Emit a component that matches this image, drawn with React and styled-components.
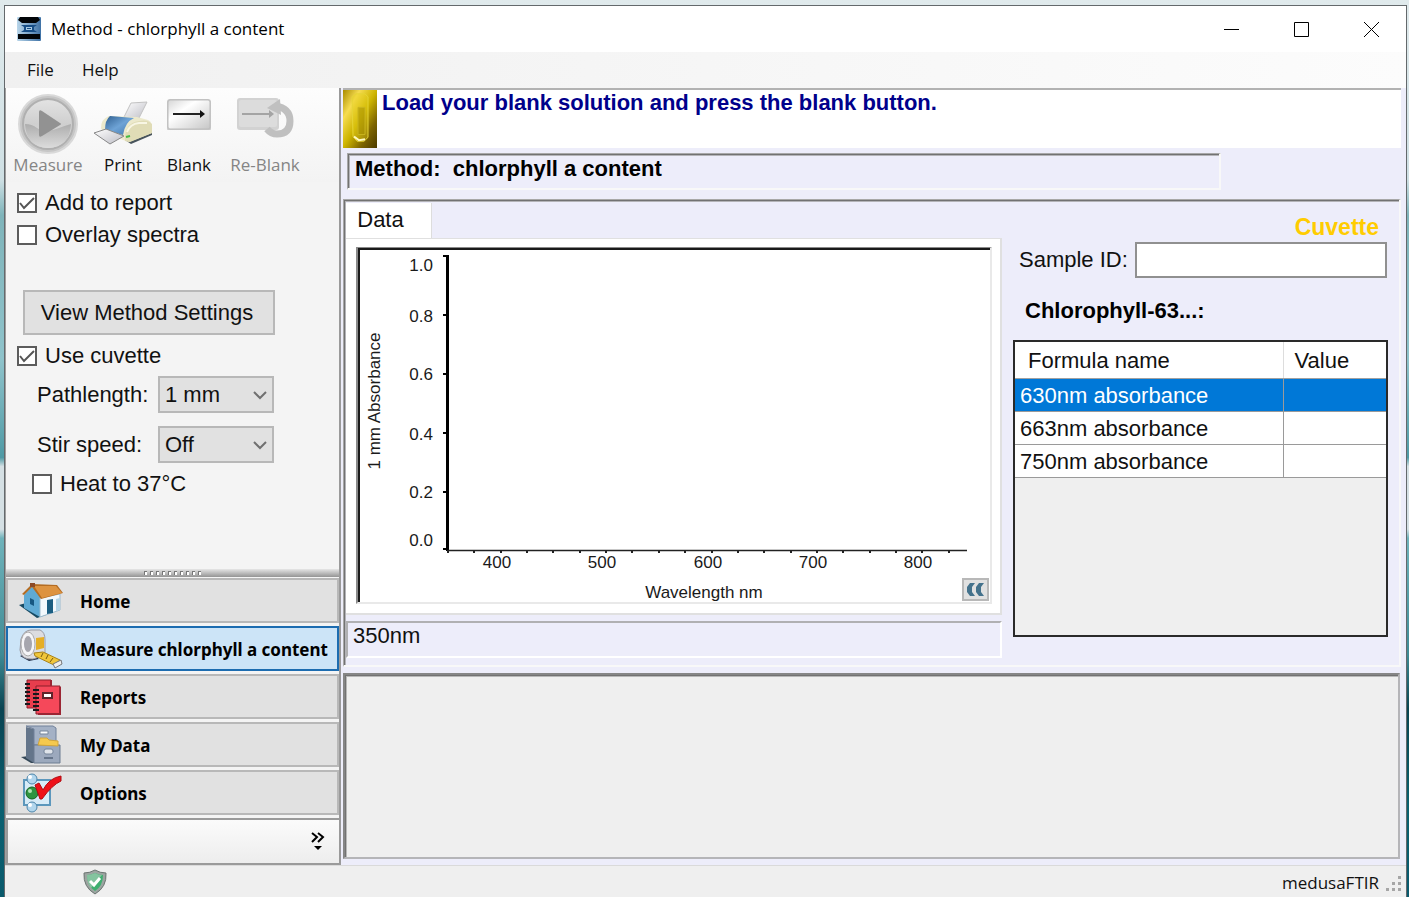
import React from "react";
import styled, { createGlobalStyle, css } from "styled-components";

const Global = createGlobalStyle`
  * { box-sizing: border-box; }
  body { margin: 0; background: #e3ecee; }
  button, input, select { font: inherit; color: inherit; margin: 0; padding: 0; }
`;

const ui = `"Open Sans", "Noto Sans", sans-serif`;
const arial = `"Liberation Sans", Arial, sans-serif`;

const Desktop = styled.div`
  min-height: 100vh;
  padding: 5px 2px 0 4px;
  display: flex;
  background: linear-gradient(
    #e0eaec 0, #cfe0e4 20%, #7fb4ba 24%, #8fc3cb 40%, #4f9aa5 51%, #d5e0e4 52%,
    #d5e0e4 59%, #6fb3bb 60%, #3f8a94 73%, #0a4452 79%, #0b6070 90%, #0a5a6c 100%
  );
`;

const Window = styled.div`
  flex: 1;
  min-width: 0;
  display: flex;
  flex-direction: column;
  border: 1px solid #64696c;
  border-bottom: 0;
  background: #ededfa;
  color: #111;
  font-family: ${arial};
  font-size: 22px;
  line-height: 26px;
`;

const TitleBar = styled.header`
  display: flex;
  align-items: center;
  height: 46px;
  padding-left: 12px;
  background: #fff;
  font-family: ${ui};
`;

const Title = styled.h1`
  flex: 1;
  margin: 0 0 0 10px;
  font-size: 17px;
  font-weight: 400;
  color: #000;
`;

const CaptionButton = styled.button`
  width: 70px;
  height: 46px;
  display: grid;
  place-items: center;
  border: 0;
  background: none;
`;

const MenuBar = styled.nav`
  display: flex;
  align-items: center;
  height: 36px;
  padding-left: 14px;
  background: linear-gradient(90deg, #f0f0f0, #fcfcfc);
  font-family: ${ui};
  font-size: 17px;
`;

const MenuItem = styled.button`
  padding: 0 8px;
  margin-right: 12px;
  border: 0;
  background: none;
`;

const Body = styled.div`
  flex: 1;
  display: flex;
  min-height: 0;
`;

const Side = styled.aside`
  width: 336px;
  flex: none;
  display: flex;
  flex-direction: column;
  background: #f4f4f4;
  border-right: 2px solid #9a9a9a;
  border-left: 1px solid #a0a0a0;
`;

const Toolbar = styled.div`
  display: flex;
  align-items: flex-start;
  height: 94px;
  padding: 6px 0 0 4px;
  background: linear-gradient(#fdfdfd, #f3f3f3);
`;

const ToolButton = styled.button`
  width: ${(p) => p.$width}px;
  display: flex;
  flex-direction: column;
  align-items: center;
  border: 0;
  background: none;
  color: #111;
  font-family: ${ui};
  font-size: 17px;
  line-height: 22px;
  white-space: nowrap;
  &:disabled { color: #858585; }
`;

const ToolIcon = styled.span`
  height: 60px;
  display: flex;
  align-items: ${(p) => (p.$top ? "flex-start" : "center")};
`;

const Settings = styled.div`
  flex: 1;
  padding: 5px 0 0 11px;
`;

const CheckRow = styled.label`
  display: flex;
  align-items: center;
  gap: 8px;
  height: 32px;
  padding-left: ${(p) => (p.$indent ? 15 : 0)}px;
`;

const CheckWrap = styled.span`
  display: grid;
  width: 20px;
  height: 20px;
  > * { grid-area: 1 / 1; }
  svg { pointer-events: none; visibility: hidden; }
  input:checked + svg { visibility: visible; }
`;

const CheckInput = styled.input`
  appearance: none;
  width: 20px;
  height: 20px;
  border: 2px solid #5c5c5c;
  background: #fff;
`;

const PushButton = styled.button`
  display: block;
  width: 252px;
  height: 45px;
  margin: 39px 0 5px 6px;
  padding-right: 4px;
  border: 2px solid #b8b8b8;
  background: #e1e1e1;
`;

const Field = styled.div`
  display: flex;
  align-items: center;
  height: 37px;
  margin: ${(p) => (p.$first ? "4px 0 13px" : "0 0 5px")};
  padding-left: 20px;
`;

const FieldLabel = styled.label`
  width: 121px;
`;

const SelectWrap = styled.span`
  position: relative;
  width: 116px;
  svg { position: absolute; right: 7px; top: 14px; pointer-events: none; }
`;

const Select = styled.select`
  appearance: none;
  display: block;
  width: 100%;
  height: 37px;
  padding-left: 5px;
  border: 2px solid #b8b8b8;
  border-radius: 0;
  background: #e1e1e1;
`;

const Splitter = styled.div`
  display: flex;
  justify-content: center;
  align-items: center;
  gap: 3px;
  height: 8px;
  background: linear-gradient(#e6e6e6, #949494);
`;

const GripDot = styled.i`
  width: 3px;
  height: 4px;
  background: #fff;
  border-top: 1px solid #777;
  border-left: 1px solid #777;
`;

const NavList = styled.nav`
  display: flex;
  flex-direction: column;
  gap: 3px;
  padding: 1px 0 3px;
`;

const NavButton = styled.button`
  display: flex;
  align-items: center;
  height: 45px;
  padding-left: 11px;
  gap: 17px;
  border: 2px solid ${(p) => (p.$active ? "#1c6cb0" : "#b8b8b8")};
  background: ${(p) => (p.$active ? "#cce4f7" : "#e1e1e1")};
  font-family: "Noto Sans", "Open Sans", sans-serif;
  font-size: 17px;
  font-weight: 700;
  color: #000;
  white-space: nowrap;
`;

const NavText = styled.span`
  padding-top: 3px;
`;

const Overflow = styled.div`
  display: flex;
  justify-content: flex-end;
  align-items: center;
  height: 47px;
  padding-right: 13px;
  border: 2px solid #9a9a9a;
  border-right: 0;
  background: linear-gradient(#fbfbfb, #ededed);
`;

const IconButton = styled.button`
  display: grid;
  place-items: center;
  border: 0;
  background: none;
`;

const Main = styled.main`
  flex: 1;
  min-width: 0;
  display: flex;
  flex-direction: column;
  padding: 0 5px 6px 2px;
`;

const Message = styled.div`
  display: flex;
  height: 60px;
  background: #fff;
  border-top: 2px solid #b2b2b2;
`;

const MessageText = styled.p`
  margin: 0 0 0 5px;
  font-weight: 700;
  color: #00008b;
`;

const sunken = css`
  border-style: solid;
  border-width: 1px 2px 2px 1px;
  border-color: #a8a8a8 #f8f8f8 #f8f8f8 #a8a8a8;
  box-shadow: inset 1px 1px #727272, inset 2px 2px #b4b4b8;
`;

const MethodBox = styled.div`
  ${sunken}
  height: 37px;
  margin: 5px 180px 9px 4px;
  padding: 2px 7px;
  font-weight: 700;
  color: #000;
  white-space: pre;
`;

const Workspace = styled.section`
  ${sunken}
  display: flex;
  height: 468px;
  padding: 3px 0 7px 2px;
`;

const DataColumn = styled.div`
  flex: 1;
  min-width: 0;
  display: flex;
  flex-direction: column;
`;

const Tab = styled.button`
  align-self: flex-start;
  width: 86px;
  height: 35px;
  padding-right: 16px;
  border: 0;
  border-right: 1px solid #ddd;
  background: #fff;
`;

const TabPage = styled.div`
  flex: 1;
  padding: 8px 8px 9px 10px;
  background: #fff;
  border: solid #e0e0e0;
  border-width: 1px 2px 2px 0;
`;

const ChartFrame = styled.div`
  position: relative;
  height: 100%;
  padding: 2px 0 0 2px;
  border-style: solid;
  border-width: 1px 2px 2px 2px;
  border-color: #8a8a8a #e9e9e9 #e9e9e9 #8a8a8a;
  box-shadow: inset 2px 2px #1a1a1a;
  svg.plot { display: block; width: 100%; height: 100%; }
`;

const CollapseButton = styled.button`
  position: absolute;
  right: 1px;
  bottom: 1px;
  width: 27px;
  height: 23px;
  display: grid;
  place-items: center;
  border: 2px solid #b8b8b8;
  background: #e1e1e1;
`;

const ReadOut = styled.output`
  height: 38px;
  margin-top: 6px;
  padding: 0 5px;
  border: solid;
  border-width: 2px;
  border-color: #b0b0b2 #fff #fff #b0b0b2;
`;

const ResultColumn = styled.div`
  width: 397px;
  flex: none;
  display: flex;
  flex-direction: column;
  padding: 11px 11px 21px 11px;
`;

const CuvetteTag = styled.div`
  align-self: flex-end;
  padding-right: 9px;
  font-size: 23px;
  font-weight: 700;
  color: #fc0;
`;

const SampleRow = styled.div`
  display: flex;
  align-items: center;
  margin-top: 2px;
  padding: 0 1px 0 6px;
  gap: 7px;
`;

const TextInput = styled.input`
  flex: 1;
  min-width: 0;
  height: 36px;
  border: 2px solid #909090;
  background: #fff;
`;

const ResultTitle = styled.h2`
  margin: 20px 0 16px 12px;
  font-size: 22px;
  line-height: 26px;
  font-weight: 700;
  color: #000;
`;

const TableBox = styled.div`
  flex: 1;
  border: 2px solid #2a2a2a;
  background: #efefef;
`;

const Table = styled.table`
  width: 100%;
  border-collapse: collapse;
  table-layout: fixed;
  background: #fff;
  th {
    height: 36px;
    padding: 2px 0 0 13px;
    text-align: left;
    font-weight: 400;
    border-bottom: 1px solid #a0a0a0;
  }
  th + th { width: 103px; padding-left: 11px; border-left: 1px solid #ddd; }
  td {
    height: 33px;
    padding: 2px 0 0 5px;
    border-bottom: 1px solid #9a9a9a;
  }
  td + td { border-left: 1px solid #9a9a9a; }
`;

const ResultRow = styled.tr`
  background: ${(p) => (p.$selected ? "#0078d7" : "#fff")};
  color: ${(p) => (p.$selected ? "#fff" : "#111")};
`;

const LogPanel = styled.section`
  flex: 1;
  min-height: 100px;
  margin: 6px 1px 0 0;
  border-style: solid;
  border-width: 2px 2px 2px 2px;
  border-color: #868686 #b5b5b8 #b5b5b8 #868686;
  box-shadow: inset 1px 1px #727272, inset 2px 2px #b8b8b8;
  background: #efefef;
`;

const StatusBar = styled.footer`
  display: flex;
  align-items: center;
  height: 32px;
  padding: 0 4px 0 77px;
  border-top: 1px solid #dadada;
  background: #efefef;
  font-family: ${ui};
  font-size: 17px;
`;

const StatusText = styled.span`
  margin-left: auto;
  padding: 2px 7px 0 0;
`;

const AppIcon = () => (
  <svg width="24" height="24" viewBox="0 0 24 24">
    <defs>
      <linearGradient id="app" x1="0" x2="1"><stop offset="0" stopColor="#b9d6ea" /><stop offset="1" stopColor="#3f72a6" /></linearGradient>
    </defs>
    <rect width="24" height="24" rx="1" fill="url(#app)" />
    <path d="M3 0h18l2 3-4 3H5L1 3zM1 17h22v5H1z" fill="#020508" />
    <path d="M4 8h16l-3 2v3l3 2H4l3-2v-3z" fill="#164d86" />
    <path d="M9 10h6v3H9z" fill="#a8cbe6" />
    <path d="M10 11h4v1h-4z" fill="#164d86" />
  </svg>
);

const PlayIcon = () => (
  <svg width="60" height="60" viewBox="0 0 60 60">
    <defs>
      <linearGradient id="ball" x1="0" y1="0" x2="0" y2="1"><stop offset="0" stopColor="#e3e3e3" /><stop offset=".5" stopColor="#cfcfcf" /><stop offset="1" stopColor="#dedede" /></linearGradient>
      <linearGradient id="pool" x1="0" y1="0" x2="0" y2="1"><stop offset="0" stopColor="#adadad" /><stop offset="1" stopColor="#dcdcdc" /></linearGradient>
    </defs>
    <circle cx="30" cy="30" r="29" fill="#c6c6c6" stroke="#d9d9d9" strokeWidth="2" />
    <circle cx="30" cy="30" r="25" fill="url(#ball)" stroke="#b0b0b0" strokeWidth="2" />
    <path d="M7 30q7 0 12 4t11 3 11-3 12-4q-1 23-23 24Q8 53 7 30z" fill="url(#pool)" />
    <path d="M21 18q0-3 3-1l18 12q2 1 0 2L24 42q-3 2-3-1z" fill="#929292" />
  </svg>
);

const PrinterIcon = () => (
  <svg width="60" height="46" viewBox="0 0 60 46">
    <defs>
      <linearGradient id="blue" x1="0" y1="0" x2="1" y2="1"><stop offset="0" stopColor="#2f5f90" /><stop offset=".5" stopColor="#6ea3d6" /><stop offset="1" stopColor="#3d74aa" /></linearGradient>
      <linearGradient id="paper" x1="0" y1="0" x2="1" y2="1"><stop offset="0" stopColor="#fff" /><stop offset="1" stopColor="#bcbcc4" /></linearGradient>
    </defs>
    <path d="M32 39l27-12v7L38 43z" fill="#48545c" />
    <path d="M38 2l16-1-9 18-14-3z" fill="url(#paper)" stroke="#c2c2c2" />
    <path d="M8 27q0-9 8-12l28 1 11 3q4 2 4 9v4L36 41 10 32z" fill="#ece9cc" />
    <path d="M32 40q-1-18 14-20 9-2 13 3v9L37 41z" fill="#e0dcb6" />
    <path d="M34 31q3-8 12-9l8 0" stroke="#f8f6e4" strokeWidth="2" fill="none" />
    <path d="M17 15l24 2q-9 4-11 17l-18-5q0-10 5-14z" fill="url(#blue)" />
    <path d="M1 32l12-4 18 7-14 8z" fill="url(#paper)" stroke="#888" />
    <path d="M33 36l4-1" stroke="#4b4" strokeWidth="2" />
  </svg>
);

const BlankIcon = () => (
  <svg width="46" height="36" viewBox="0 0 46 36">
    <defs>
      <linearGradient id="card" x1="0" y1="0" x2="1" y2="1"><stop offset="0" stopColor="#d6d6d6" /><stop offset=".35" stopColor="#fff" /><stop offset="1" stopColor="#c6c6c6" /></linearGradient>
    </defs>
    <rect x="1" y="5" width="44" height="32" rx="3" fill="#c8c8c8" />
    <rect x="2" y="6" width="42" height="29" rx="2" fill="url(#card)" stroke="#bdbdbd" />
    <path d="M7 20h29" stroke="#222" strokeWidth="2" />
    <path d="M34 16l5 4-5 4z" fill="#111" />
  </svg>
);

const ReblankIcon = () => (
  <svg width="60" height="46" viewBox="0 0 60 46">
    <rect x="2" y="4" width="42" height="32" rx="3" fill="#d2d2d2" />
    <rect x="4" y="6" width="38" height="27" rx="2" fill="#dcdcdc" />
    <path d="M7 20h28" stroke="#a4a4a4" strokeWidth="2" />
    <path d="M34 16l5 4-5 4z" fill="#a4a4a4" />
    <path d="M40 12q15 2 15 15 0 13-13 13-6 0-10-5" fill="none" stroke="#c0c0c0" strokeWidth="7" />
    <path d="M32 14L45 5l1 16z" fill="#c0c0c0" />
  </svg>
);

const HomeIcon = () => (
  <svg width="44" height="38" viewBox="0 0 44 38">
    <path d="M0 23l7-2 13 11 7 1-9 3z" fill="#174a63" />
    <path d="M5 13L13 4l9 11-1 20-16-9z" fill="#5faad4" />
    <path d="M21 16l20-4v16l-20 7z" fill="#f3f9fd" stroke="#9dbccf" />
    <path d="M3 12L13 2l25 1 6 8-22 6-9-12-8 8z" fill="#b46c22" />
    <path d="M15 4l22 0 6 7-20 5z" fill="#dd9340" />
    <path d="M11 1h5v4h-5z" fill="#8c4a26" />
    <path d="M28 18l6-1v14l-6 1z" fill="#1b5e82" />
    <path d="M37 17l4-1v12l-4 1z" fill="#b5d6e8" />
    <path d="M11 16l4 2v6l-4-2z" fill="#175781" />
  </svg>
);

const TapeIcon = () => (
  <svg width="44" height="40" viewBox="0 0 44 40">
    <path d="M1 27l9 5 10-2-9-7z" fill="#26324a" />
    <path d="M2 10Q5 1 12 1l9 0q5 2 5 10v15l-12 4Q2 31 1 21z" fill="#dcdce0" stroke="#9b9ba3" />
    <ellipse cx="9" cy="15" rx="7" ry="12" fill="#f5f5f8" stroke="#aaa" />
    <ellipse cx="9" cy="15" rx="4" ry="8" fill="#a6a6ae" />
    <path d="M17 9l8-1v11l-8 2z" fill="#e5ae25" />
    <path d="M15 24l9-1 17 8-6 5-19-9z" fill="#f0c63b" stroke="#aa8318" />
    <path d="M24 24l-2 4m7-2l-2 4m7-1l-3 4" stroke="#775b11" />
    <path d="M34 35l8-4 1 4-7 4z" fill="#eee" stroke="#777" />
  </svg>
);

const ReportsIcon = () => (
  <svg width="44" height="38" viewBox="0 0 44 38">
    <g stroke="#8c1f2b" strokeWidth="1">
      <path d="M8 2h24v28H8z" fill="#e83d4d" />
      <path d="M17 8h24v28H17z" fill="#f5485a" />
    </g>
    <path d="M32 2v6M41 9v27H19" fill="none" stroke="#9b2533" strokeWidth="2" />
    <path d="M6 6h5M6 10h5M6 14h5M6 18h5M6 22h5M6 26h5M14 12h6M14 16h6M14 20h6M14 24h6M14 28h6M14 32h6" stroke="#18181c" strokeWidth="2" />
    <path d="M24 15h9v5h-9z" fill="#fff" stroke="#61242b" strokeWidth="2" />
  </svg>
);

const CabinetIcon = () => (
  <svg width="44" height="40" viewBox="0 0 44 40">
    <path d="M2 32l8-1 6 7h-4z" fill="#354858" />
    <path d="M7 2l8 2v34l-8-5z" fill="#64758a" />
    <path d="M7 1h27l3 2v17H15V4z" fill="#a4b1c5" stroke="#71819a" />
    <path d="M15 20h26v18H15z" fill="#9ca9bd" stroke="#6d7c91" />
    <path d="M19 20l2-7 7 0 2 2 9 1v5z" fill="#f5c94e" stroke="#d0a43c" />
    <path d="M21 6h8v3h-8z" fill="#f8fafc" stroke="#77869b" />
    <rect x="25" y="24" width="9" height="5" rx="2" fill="#dfe4ea" stroke="#77869b" />
    <path d="M25 33h9" stroke="#66758a" strokeWidth="2" />
  </svg>
);

const OptionsIcon = () => (
  <svg width="44" height="40" viewBox="0 0 44 40">
    <path d="M5 7h26v25H5z" fill="#d7ebf7" stroke="#5c97bc" strokeWidth="2" />
    <circle cx="13" cy="6" r="5" fill="#b2d6ed" stroke="#4d86ab" />
    <circle cx="13" cy="20" r="6" fill="#2f9440" stroke="#136220" />
    <circle cx="11" cy="18" r="2" fill="#b0e6b4" />
    <circle cx="13" cy="34" r="5" fill="#b2d6ed" stroke="#4d86ab" />
    <circle cx="11" cy="4" r="2" fill="#fff" /><circle cx="11" cy="32" r="2" fill="#fff" />
    <path d="M16 12l4-2 4 7Q30 5 42 3v5Q33 12 23 26h-2z" fill="#ee1018" stroke="#b00c12" />
  </svg>
);

const ShieldIcon = () => (
  <svg width="26" height="26" viewBox="0 0 26 26">
    <path d="M13 1q5 3 11 3 1 14-11 21Q1 18 2 4q6 0 11-3z" fill="#9ca5a1" stroke="#6c7572" />
    <path d="M13 4q4 2 8 2 0 11-8 16Q5 17 5 6q4 0 8-2z" fill="#3faf70" />
    <path d="M13 4q-4 2-8 2 0 8 4 13l11-13q-4 0-7-2z" fill="#a3cdb4" opacity=".7" />
    <path d="M8 12l4 4 6-7" fill="none" stroke="#fff" strokeWidth="3" />
  </svg>
);

const CuvetteSvg = styled.svg`
  flex: none;
`;

const CuvetteIcon = () => (
  <CuvetteSvg width="34" height="58" viewBox="0 0 34 60" preserveAspectRatio="none">
    <defs>
      <linearGradient id="gold" x1="0" y1="0" x2="1" y2="1"><stop offset="0" stopColor="#a98a00" /><stop offset=".25" stopColor="#f6dc50" /><stop offset=".5" stopColor="#cdb400" /><stop offset=".75" stopColor="#7d6400" /><stop offset="1" stopColor="#4a3900" /></linearGradient>
    </defs>
    <rect width="34" height="60" fill="url(#gold)" />
    <path d="M9 7l4-3h9l3 3v42l-4 4h-7l-4-5z" fill="#e8d21c" fillOpacity=".35" stroke="#e6d436" />
    <path d="M15 18h7v28h-7z" fill="#a08a00" fillOpacity=".5" stroke="#c9b520" />
    <path d="M11 48l5 4 6-1" stroke="#fffac0" strokeWidth="2" fill="none" />
  </CuvetteSvg>
);

const Check = ({ label, indent, on }) => (
  <CheckRow $indent={indent}>
    <CheckWrap>
      <CheckInput type="checkbox" defaultChecked={on} />
      <svg width="20" height="20" viewBox="0 0 20 20"><path d="M3 10l4 5 10-10" fill="none" stroke="#555" strokeWidth="2" /></svg>
    </CheckWrap>
    {label}
  </CheckRow>
);

const Picker = ({ id, label, value, options, first }) => (
  <Field $first={first}>
    <FieldLabel htmlFor={id}>{label}</FieldLabel>
    <SelectWrap>
      <Select id={id} defaultValue={value}>{options.map((o) => <option key={o}>{o}</option>)}</Select>
      <svg width="14" height="10" viewBox="0 0 14 10"><path d="M1 2l6 6 6-6" fill="none" stroke="#707070" strokeWidth="2" /></svg>
    </SelectWrap>
  </Field>
);

const yTicks = [["1.0", 256, 265], ["0.8", 315, 316], ["0.6", 374, 374], ["0.4", 433, 434], ["0.2", 492, 492], ["0.0", 549, 540]];
const xLabels = [["400", 497], ["500", 602], ["600", 708], ["700", 813], ["800", 918]];
const xTicks = Array.from({ length: 20 }, (_, i) => Math.round(448 + i * 26.35));

const Plot = () => (
  <svg className="plot" viewBox="360 250 630 352" fontFamily='"Liberation Sans", Arial, sans-serif' fontSize="17" fill="#1a1a1a">
    <path d="M447.5 255v296" stroke="#000" strokeWidth="3" />
    <path d="M447 550.5h520" stroke="#222" strokeWidth="1.5" />
    {yTicks.map(([t, y, ly]) => (
      <g key={t}>
        <path d={`M443 ${y}h5`} stroke="#000" strokeWidth="2" />
        <text x="433" y={ly + 6} textAnchor="end">{t}</text>
      </g>
    ))}
    {xTicks.map((x) => <path key={x} d={`M${x} 550v3`} stroke="#222" strokeWidth="2" />)}
    {xLabels.map(([t, x]) => <text key={t} x={x} y="568" textAnchor="middle">{t}</text>)}
    <text x="704" y="598" textAnchor="middle">Wavelength nm</text>
    <text transform="translate(380 401) rotate(-90)" textAnchor="middle">1 mm Absorbance</text>
  </svg>
);

const navItems = [
  ["Home", HomeIcon],
  ["Measure chlorphyll a content", TapeIcon],
  ["Reports", ReportsIcon],
  ["My Data", CabinetIcon],
  ["Options", OptionsIcon],
];

const formulas = ["630nm absorbance", "663nm absorbance", "750nm absorbance"];

export default function App() {
  return (
    <Desktop>
      <Global />
      <Window>
        <TitleBar>
          <AppIcon />
          <Title>Method - chlorphyll a content</Title>
          <CaptionButton aria-label="Minimize"><svg width="15" height="15"><path d="M0 7.5h15" stroke="#000" /></svg></CaptionButton>
          <CaptionButton aria-label="Maximize"><svg width="15" height="15"><path d="M.5.5h14v14H.5z" fill="none" stroke="#000" /></svg></CaptionButton>
          <CaptionButton aria-label="Close"><svg width="15" height="15"><path d="M0 0l15 15M15 0L0 15" stroke="#000" /></svg></CaptionButton>
        </TitleBar>
        <MenuBar>
          <MenuItem>File</MenuItem>
          <MenuItem>Help</MenuItem>
        </MenuBar>
        <Body>
          <Side>
            <Toolbar>
              <ToolButton $width={76} disabled><ToolIcon><PlayIcon /></ToolIcon>Measure</ToolButton>
              <ToolButton $width={74}><ToolIcon><PrinterIcon /></ToolIcon>Print</ToolButton>
              <ToolButton $width={58}><ToolIcon $top><BlankIcon /></ToolIcon>Blank</ToolButton>
              <ToolButton $width={94} disabled><ToolIcon $top><ReblankIcon /></ToolIcon>Re-Blank</ToolButton>
            </Toolbar>
            <Settings>
              <Check label="Add to report" on />
              <Check label="Overlay spectra" />
              <PushButton>View Method Settings</PushButton>
              <Check label="Use cuvette" on />
              <Picker id="path" label="Pathlength:" value="1 mm" options={["1 mm", "10 mm"]} first />
              <Picker id="stir" label="Stir speed:" value="Off" options={["Off", "Slow", "Fast"]} />
              <Check label="Heat to 37°C" indent />
            </Settings>
            <Splitter>{Array.from({ length: 10 }, (_, i) => <GripDot key={i} />)}</Splitter>
            <NavList>
              {navItems.map(([name, Icon], i) => (
                <NavButton key={name} $active={i === 1}><Icon /><NavText>{name}</NavText></NavButton>
              ))}
            </NavList>
            <Overflow>
              <IconButton aria-label="Configure buttons">
                <svg width="16" height="20" viewBox="0 0 16 20"><path d="M2 1l5 4-5 5M8 1l5 4-5 5" fill="none" stroke="#000" strokeWidth="2" /><path d="M4 14h8l-4 4z" /></svg>
              </IconButton>
            </Overflow>
          </Side>
          <Main>
            <Message>
              <CuvetteIcon />
              <MessageText>Load your blank solution and press the blank button.</MessageText>
            </Message>
            <MethodBox>{"Method:  chlorphyll a content"}</MethodBox>
            <Workspace>
              <DataColumn>
                <Tab>Data</Tab>
                <TabPage>
                  <ChartFrame>
                    <Plot />
                    <CollapseButton aria-label="Collapse">
                      <svg width="19" height="15" viewBox="0 0 19 15" fill="#44728c"><path d="M4 1h5L6 5v5l3 4H4L1 10V5zM13 1h5l-3 4v5l3 4h-5l-3-4V5z" /></svg>
                    </CollapseButton>
                  </ChartFrame>
                </TabPage>
                <ReadOut>350nm</ReadOut>
              </DataColumn>
              <ResultColumn>
                <CuvetteTag>Cuvette</CuvetteTag>
                <SampleRow>
                  <label htmlFor="sample">Sample ID:</label>
                  <TextInput id="sample" type="text" />
                </SampleRow>
                <ResultTitle>Chlorophyll-63...:</ResultTitle>
                <TableBox>
                  <Table>
                    <thead><tr><th>Formula name</th><th>Value</th></tr></thead>
                    <tbody>
                      {formulas.map((f, i) => <ResultRow key={f} $selected={i === 0}><td>{f}</td><td /></ResultRow>)}
                    </tbody>
                  </Table>
                </TableBox>
              </ResultColumn>
            </Workspace>
            <LogPanel aria-label="Log" />
          </Main>
        </Body>
        <StatusBar>
          <ShieldIcon />
          <StatusText>medusaFTIR</StatusText>
          <svg width="16" height="24" viewBox="0 0 16 24" fill="#a6a6a6">
            <path d="M12 6h3v3h-3zM12 12h3v3h-3zM12 18h3v3h-3zM6 12h3v3H6zM6 18h3v3H6zM0 18h3v3H0z" />
          </svg>
        </StatusBar>
      </Window>
    </Desktop>
  );
}
